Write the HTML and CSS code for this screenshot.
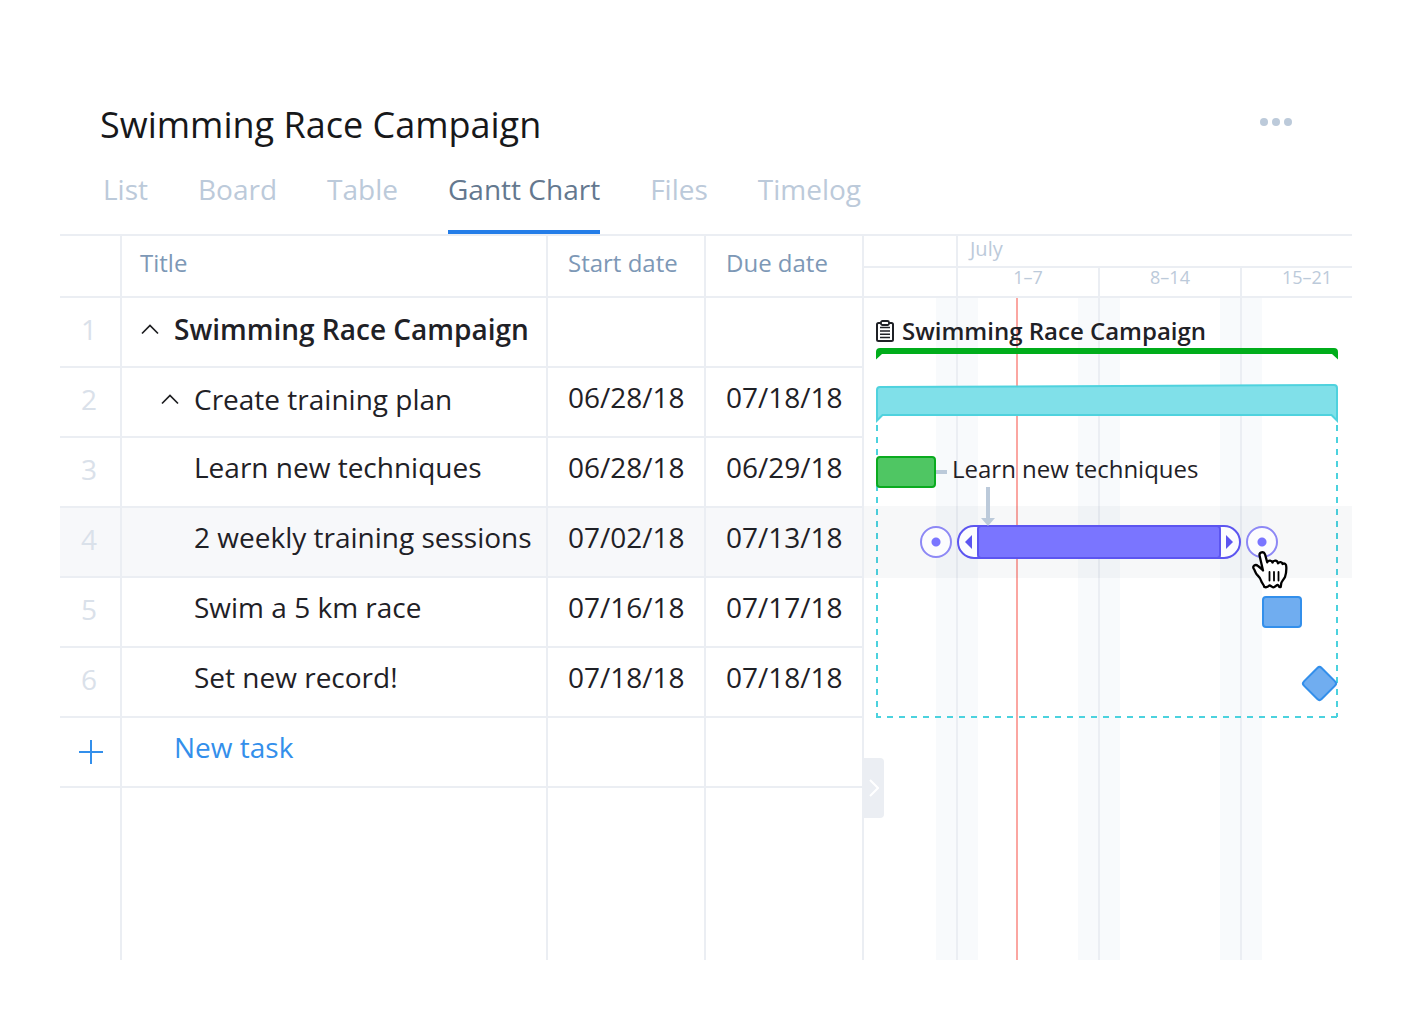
FILE: index.html
```html
<!DOCTYPE html>
<html lang="en">
<head>
<meta charset="utf-8">
<title>Swimming Race Campaign</title>
<link rel="stylesheet" href="styles.css">
</head>
<body>
<main class="project">
  <header class="project-header">
    <h1 class="project-title">Swimming Race Campaign</h1>
    <button class="icon-button more" type="button" aria-label="More actions">
      <svg width="32" height="8" viewBox="0 0 32 8" fill="#bccada"><circle cx="4" cy="4" r="4"/><circle cx="16" cy="4" r="4"/><circle cx="28" cy="4" r="4"/></svg>
    </button>
  </header>
  <nav class="tabs">
    <a class="tab" href="#list">List</a>
    <a class="tab" href="#board">Board</a>
    <a class="tab" href="#table">Table</a>
    <a class="tab tab-active" href="#gantt" aria-current="page">Gantt Chart</a>
    <a class="tab" href="#files">Files</a>
    <a class="tab" href="#timelog">Timelog</a>
  </nav>

  <div class="workspace">
    <table class="tasks">
      <colgroup><col class="col-number"><col class="col-title"><col class="col-date"><col class="col-date"></colgroup>
      <thead>
        <tr><th></th><th class="title-head" scope="col">Title</th><th scope="col">Start date</th><th scope="col">Due date</th></tr>
      </thead>
      <tbody>
        <tr>
          <td class="number">1</td>
          <td class="parent"><div class="task task-root"><button class="icon-button chevron" type="button" aria-label="Collapse"><svg width="20" height="12" viewBox="0 0 20 12" fill="none" stroke="#1c1d20" stroke-width="1.7"><path d="M2 10.500 10 2.500 18 10.500"/></svg></button>Swimming Race Campaign</div></td>
          <td></td><td></td>
        </tr>
        <tr>
          <td class="number">2</td>
          <td class="parent"><div class="task task-nested"><button class="icon-button chevron" type="button" aria-label="Collapse"><svg width="20" height="12" viewBox="0 0 20 12" fill="none" stroke="#1c1d20" stroke-width="1.7"><path d="M2 10.500 10 2.500 18 10.500"/></svg></button>Create training plan</div></td>
          <td>06/28/18</td><td>07/18/18</td>
        </tr>
        <tr><td class="number">3</td><td class="leaf">Learn new techniques</td><td>06/28/18</td><td>06/29/18</td></tr>
        <tr class="selected"><td class="number">4</td><td class="leaf">2 weekly training sessions</td><td>07/02/18</td><td>07/13/18</td></tr>
        <tr><td class="number">5</td><td class="leaf">Swim a 5 km race</td><td>07/16/18</td><td>07/17/18</td></tr>
        <tr><td class="number">6</td><td class="leaf">Set new record!</td><td>07/18/18</td><td>07/18/18</td></tr>
        <tr>
          <td class="add"><svg width="24" height="24" viewBox="0 0 24 24" stroke="#338feb" stroke-width="2"><path d="M12 0V24M0 12H24"/></svg></td>
          <td class="new-task"><button class="link-button" type="button">New task</button></td>
          <td></td><td></td>
        </tr>
        <tr class="filler"><td></td><td></td><td></td><td></td></tr>
      </tbody>
    </table>

    <section class="chart" aria-label="Gantt chart">
      <div class="months"><span class="lead"></span><span class="month">July</span></div>
      <div class="weeks"><span class="lead"></span><span class="week">1–7</span><span class="week">8–14</span><span class="week week-last">15–21</span></div>

      <div class="timeline">
        <div class="calendar">
          <span class="workdays-lead"></span><span class="weekend"></span>
          <span class="workdays"></span><span class="weekend"></span>
          <span class="workdays"></span><span class="weekend"></span>
        </div>
        <div class="today"></div>

        <svg class="overlay" width="488" height="430" viewBox="864 298 488 430" fill="none">
          <path d="M876 359.500V352Q876 348 880 348H1334Q1338 348 1338 352V359.500L1332 354H882Z" fill="#00ad1b"/>
          <path d="M877 425V717M1337 425V717" stroke="#4bd2de" stroke-width="2" stroke-dasharray="6 6"/>
          <path d="M876 717H1338" stroke="#4bd2de" stroke-width="2" stroke-dasharray="6 6" stroke-dashoffset="1"/>
          <path d="M877 420.500V390Q877 387 880 387L1334 385Q1337 385 1337 388V420.500L1331.500 415H882.500Z" fill="#80e0e9" stroke="#4fd2de" stroke-width="2"/>
          <rect x="1307" y="671" width="25" height="25" rx="3" transform="rotate(45 1319.500 683.500)" fill="#70adf0" stroke="#338feb" stroke-width="2"/>
        </svg>

        <div class="rows">
          <div class="row">
            <div class="row-label summary-label">
              <svg width="18" height="22" viewBox="0 0 18 22" fill="none" stroke="#1f2126" stroke-width="2"><rect x="1" y="3" width="16" height="18" rx="1.500"/><path d="M4 7.500H14M4 11H14M4 14.200H14M4 17.500H14" stroke-width="1.600"/><rect x="5" y="1" width="8" height="4" rx="1.500" fill="#fff" stroke-width="1.800"/></svg>
              Swimming Race Campaign
            </div>
          </div>
          <div class="row"></div>
          <div class="row">
            <div class="bar bar-green"></div>
            <div class="stub"></div>
            <div class="row-label bar-label">Learn new techniques</div>
          </div>
          <div class="row row-selected">
            <span class="link-dot link-dot-start"></span>
            <div class="bar-resizable">
              <svg width="7" height="14" viewBox="0 0 7 14" fill="#5c55f0"><path d="M7 0V14L0 7Z"/></svg>
              <div class="bar-fill"></div>
              <svg width="7" height="14" viewBox="0 0 7 14" fill="#5c55f0"><path d="M0 0V14L7 7Z"/></svg>
            </div>
            <span class="link-dot link-dot-end"></span>
          </div>
          <div class="row"><div class="bar bar-blue"></div></div>
          <div class="row"></div>
        </div>

        <svg class="overlay" width="488" height="430" viewBox="864 298 488 430" fill="none">
          <path d="M986 487H990V518H995L988 526L981 518H986Z" fill="#bccada"/>
          <g transform="translate(1252 550)" stroke="#000" stroke-width="2.300" stroke-linejoin="round" stroke-linecap="round">
            <path fill="#fff" d="M11 20.500 7.600 5.800C6.800 2.300 11.800 0.800 13 4.300L15.200 12.300C16.200 10.300 19.500 10 20.500 12.500C21.500 9.800 25.400 9.800 26 13.300C27.500 11.300 30.300 11.800 30.500 14C32.500 12.800 34.300 14 34.300 17C34.500 20.500 34 24 33 27C31.500 29.800 29.700 31.300 29.300 33L28.700 37C27.500 37.500 26.700 36.500 26 35C24.500 34.500 23.500 37.300 21.300 37.300C19.500 37 19 35.300 17.300 35.500C16 37 14.500 37.700 12.300 37C12 34.500 9.800 33.500 9 30.500C8.300 27.800 6.800 26.500 5 24.700C3 22.300 3 20.500 1.700 18.700C0 16 3.500 13.800 6 16C8.300 17.500 9.500 19 11 20.500Z"/>
            <path stroke-width="1.800" d="M17.500 22V30.500M22 22V30.500M26.500 22V30.500"/>
          </g>
        </svg>

        <button class="expander" type="button" aria-label="Expand table">
          <svg width="10" height="18" viewBox="0 0 10 18" fill="none" stroke="#fff" stroke-width="2"><path d="M1 1 9 9 1 17"/></svg>
        </button>
      </div>
    </section>
  </div>
</main>
</body>
</html>
```
FILE: styles.css
```css
* { box-sizing: border-box; }

body {
  margin: 0;
  background: #fff;
  color: #1f2126;
  font-family: "Open Sans", "Noto Sans", sans-serif;
  font-size: 28px;
}

button {
  padding: 0;
  border: 0;
  background: none;
  font: inherit;
  cursor: pointer;
}

svg { display: block; }

.project { padding: 100px 60px 60px; }

.project-header {
  display: flex;
  justify-content: space-between;
  align-items: flex-start;
  padding: 0 60px 0 40px;
}

.project-title {
  margin: 0;
  color: #17181a;
  font-size: 36px;
  font-weight: 400;
  line-height: 50px;
}

.more { padding-top: 18px; }

.tabs {
  display: flex;
  gap: 50px;
  margin-top: 20px;
  padding-left: 43px;
}

.tab {
  padding-bottom: 22px;
  border-bottom: 4px solid transparent;
  color: #bccada;
  line-height: 38px;
  text-decoration: none;
}

.tab-active {
  border-color: #247de8;
  color: #64788f;
}

.workspace {
  display: flex;
  border-top: 2px solid #ebeef3;
}

/* Task table */

.tasks {
  flex: none;
  width: 804px;
  border-spacing: 0;
  table-layout: fixed;
}

.col-number { width: 62px; }
.col-title { width: 426px; }
.col-date { width: 158px; }

.tasks th,
.tasks td {
  height: 70px;
  padding: 11px 0 0 20px;
  border: solid #ebeef3;
  border-width: 0 2px 2px 0;
  line-height: 36px;
  text-align: left;
  vertical-align: top;
  white-space: nowrap;
}

.tasks th {
  height: 62px;
  color: #7d98b6;
  font-size: 24px;
  font-weight: 400;
  line-height: 32px;
}

.tasks .title-head { padding-left: 18px; }

.tasks .number {
  padding: 13px 2px 0 0;
  color: #dae1ea;
  text-align: center;
}

.tasks .parent { padding: 13px 0 0 18px; }
.tasks .leaf { padding-left: 72px; }
.tasks .new-task { padding-left: 52px; }
.tasks .add { padding: 22px 0 0 19px; }
.tasks .filler td { height: 172px; border-bottom: 0; }

.selected { background: #f7f8fa; }

.task {
  display: flex;
  align-items: center;
}

.task-root { font-weight: 600; }
.task-nested { padding-left: 20px; }
.chevron { margin-right: 14px; }

.link-button {
  display: block;
  color: #338feb;
}

/* Chart */

.chart {
  flex: 1;
  min-width: 488px;
}

.months,
.weeks {
  display: flex;
  border-bottom: 2px solid #ebeef3;
  color: #bccada;
}

.months {
  height: 32px;
  font-size: 20px;
  line-height: 26px;
}

.weeks {
  height: 30px;
  font-size: 18px;
  line-height: 18px;
}

.lead { width: 92px; }

.month {
  flex: 1;
  padding-left: 12px;
  border-left: 2px solid #ebeef3;
}

.week {
  width: 142px;
  border-left: 2px solid #ebeef3;
  text-align: center;
}

.week-last {
  flex: 1;
  padding-left: 20px;
}

.timeline {
  position: relative;
  height: 662px;
}

.calendar {
  display: flex;
  height: 100%;
}

.workdays-lead { width: 72px; }
.workdays { width: 100px; }

.weekend {
  width: 42px;
  background: linear-gradient(#ebeef3, #ebeef3) 20px 0 / 2px 100% no-repeat #f8fafc;
}

.today {
  position: absolute;
  top: 0;
  bottom: 0;
  left: 152px;
  width: 2px;
  background: #fba6a1;
}

.rows {
  position: absolute;
  inset: 0 0 auto;
}

.row {
  position: relative;
  height: 70px;
}

.row-selected::before {
  content: "";
  position: absolute;
  inset: -2px 0 0;
  background: rgba(50, 65, 100, 0.04);
}

.row-label {
  font-size: 24px;
  line-height: 32px;
  white-space: nowrap;
}

.summary-label {
  display: flex;
  align-items: center;
  gap: 8px;
  padding: 17px 0 0 12px;
  font-weight: 600;
}

.bar-label { padding: 15px 0 0 88px; }

.bar {
  position: absolute;
  top: 18px;
  height: 32px;
  border: 2px solid;
  border-radius: 4px;
}

.bar-green {
  left: 12px;
  width: 60px;
  border-color: #0aab1f;
  background: #4fc663;
}

.bar-blue {
  left: 398px;
  width: 40px;
  border-color: #338feb;
  background: #70adf0;
}

.stub {
  position: absolute;
  top: 32px;
  left: 72px;
  width: 11px;
  height: 4px;
  background: #bccada;
}

.bar-resizable {
  position: absolute;
  top: 17px;
  left: 93px;
  display: flex;
  align-items: center;
  justify-content: space-between;
  width: 284px;
  height: 34px;
  padding: 0 6px;
  border: 2px solid #5c55f0;
  border-radius: 17px;
  background: #fcfcfe;
}

.bar-fill {
  width: 244px;
  height: 34px;
  border: 2px solid #5c55f0;
  border-radius: 4px;
  background: #7a75ff;
}

.link-dot {
  position: absolute;
  top: 18px;
  width: 32px;
  height: 32px;
  border: 2px solid #8d88f5;
  border-radius: 50%;
  background: radial-gradient(circle, #7a75ff 4px, #fcfcfe 5px);
}

.link-dot-start { left: 56px; }
.link-dot-end { left: 382px; }

.overlay {
  position: absolute;
  top: 0;
  left: 0;
}

.expander {
  position: absolute;
  top: 460px;
  left: 0;
  width: 20px;
  height: 60px;
  padding-left: 5px;
  border-radius: 0 4px 4px 0;
  background: #ebeef3;
}
```
